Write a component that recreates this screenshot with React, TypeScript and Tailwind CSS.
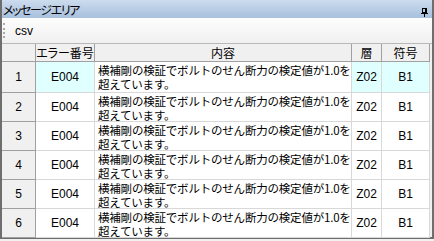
import React from "react";

const rows = [1, 2, 3, 4, 5, 6];
const F = { fontFamily: '"Noto Sans CJK JP", "Liberation Sans", sans-serif' };

export default function App() {
  return (
    <div className="w-[434px] h-[241px] bg-[#f0f0f0]" style={F}>
      <div className="w-[434px] h-[239px] border-x-2 border-b-2 border-[#6e6e6e] flex flex-col bg-[#f0f0f0]">
        {/* title bar */}
        <div className="h-[18px] shrink-0 flex items-end justify-between pl-[1px] pr-[4px] bg-gradient-to-b from-[#cddcee] to-[#a7c0dd]">
          <span className="text-[12px] leading-[14px] text-black [font-feature-settings:'palt'] tracking-[-1.4px] pb-[1px]">メッセージエリア</span>
          <svg width="7" height="9" viewBox="0 0 7 9" className="mb-[1px]">
            <rect x="1.5" y="0.5" width="4" height="4" fill="none" stroke="#000" />
            <rect x="4" y="1" width="1" height="4" fill="#000" />
            <rect x="0" y="5" width="7" height="1" fill="#000" />
            <rect x="3" y="6" width="1" height="3" fill="#000" />
          </svg>
        </div>
        {/* toolbar */}
        <div className="h-[26px] shrink-0 flex items-center border-b border-[#b8b8b8] bg-gradient-to-b from-[#fdfdfd] to-[#f0f0f0]">
          <div className="ml-[1px] w-[2px] h-[15px] border-l-2 border-dotted border-[#a8a8a8]" />
          <span className="ml-[10px] text-[12px] leading-[12px] text-black" style={{ fontFamily: '"Liberation Sans", sans-serif' }}>csv</span>
        </div>
        {/* grid */}
        <div className="grid grid-cols-[34px_59px_257px_30px_48px] grid-rows-[18px_31px_repeat(5,29px)] text-black">
          <div className="border-r border-b border-[#a0a0a0] bg-[#f0f0f0]" />
          <div className="border-r border-b border-[#a0a0a0] bg-[#f0f0f0] flex items-center justify-center text-[12px] leading-[14px] [font-feature-settings:'palt']">エラー番号</div>
          <div className="border-r border-b border-[#a0a0a0] bg-[#f0f0f0] flex items-center justify-center text-[12px] leading-[14px]">内容</div>
          <div className="border-r border-b border-[#a0a0a0] bg-[#f0f0f0] flex items-center justify-center text-[12px] leading-[14px]">層</div>
          <div className="border-r border-b border-[#a0a0a0] bg-[#f0f0f0] flex items-center justify-center text-[12px] leading-[14px]">符号</div>
          {rows.map((r) => {
            const sel = r === 1;
            const cell = sel ? "bg-[#e0ffff]" : "bg-white";
            return (
              <React.Fragment key={r}>
                <div className="border-r border-b border-[#a0a0a0] bg-[#f0f0f0] flex items-center justify-center text-[12px] leading-[14px]" style={{ fontFamily: '"Liberation Sans", sans-serif' }}>{r}</div>
                <div className={`border-r border-b border-[#d8d8d8] ${cell} flex items-center justify-center text-[12px] leading-[14px]`} style={{ fontFamily: '"Liberation Sans", sans-serif' }}>E004</div>
                <div className="border-r border-b border-[#d8d8d8] bg-white pl-[3px] pt-[1px] text-[11.5px] leading-[14px] whitespace-nowrap overflow-hidden tracking-[-0.2px]">
                  <div>横補剛の検証でボルトのせん断力の検定値が1.0を</div>
                  <div>超えています。</div>
                </div>
                <div className={`border-r border-b border-[#d8d8d8] ${cell} flex items-center justify-center text-[12px] leading-[14px]`} style={{ fontFamily: '"Liberation Sans", sans-serif' }}>Z02</div>
                <div className={`border-r border-b border-[#d8d8d8] ${cell} flex items-center justify-center text-[12px] leading-[14px]`} style={{ fontFamily: '"Liberation Sans", sans-serif' }}>B1</div>
              </React.Fragment>
            );
          })}
        </div>
      </div>
    </div>
  );
}
